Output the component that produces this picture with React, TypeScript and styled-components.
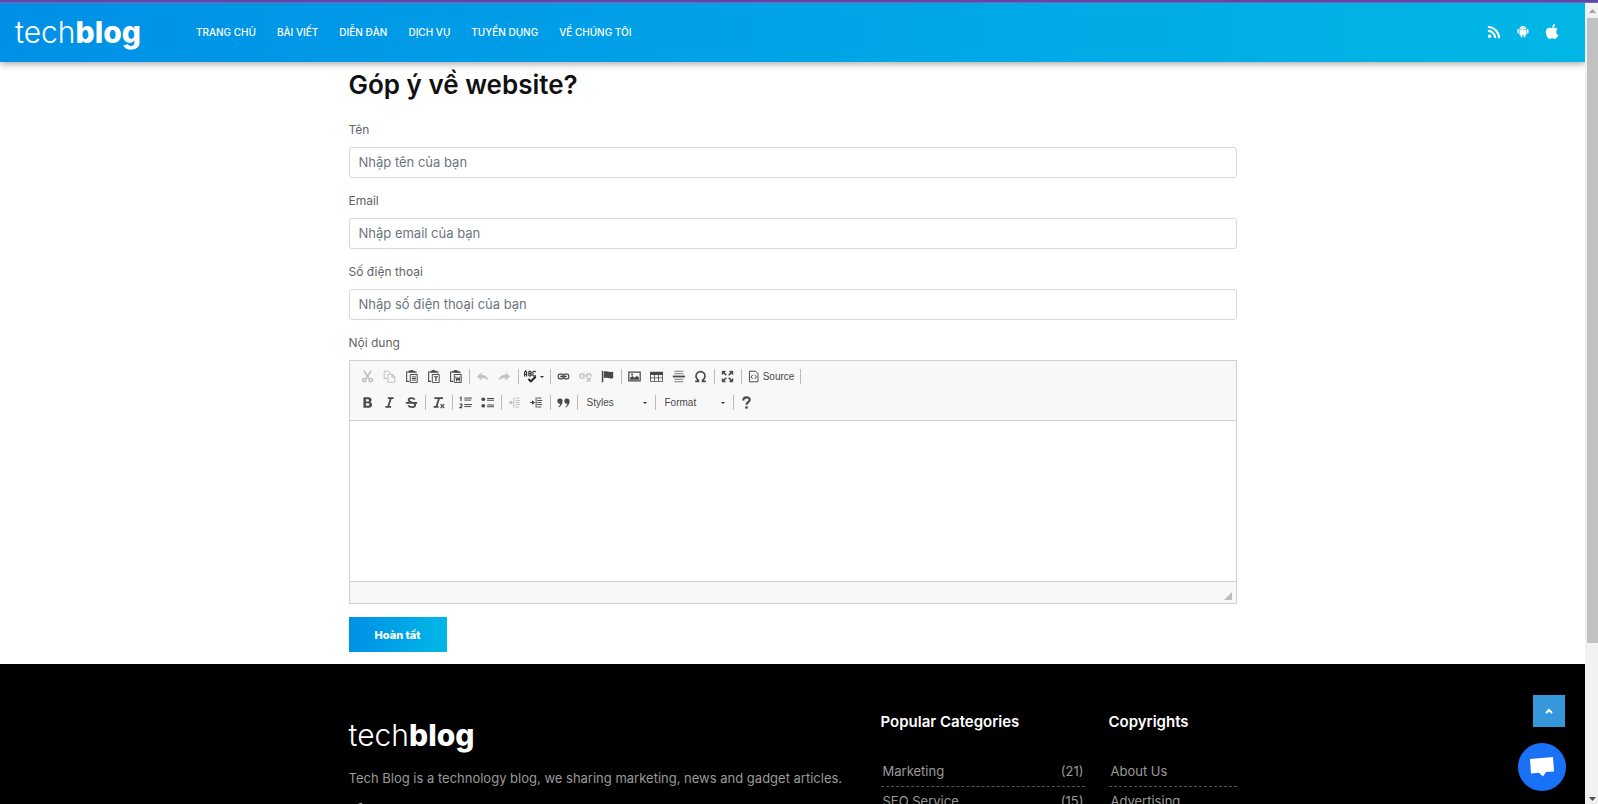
import React from 'react';
import styled, { createGlobalStyle, css } from 'styled-components';
import { FaRss, FaApple, FaFacebookF } from 'react-icons/fa';
import { IoLogoAndroid } from 'react-icons/io';

const sans = `Inter, 'Noto Sans', sans-serif`;
const gradient = 'linear-gradient(to right, #0090e7 0%, #00b7e6 100%)';

const GlobalStyle = createGlobalStyle`
  *, *::before, *::after { box-sizing: border-box; }
  body { margin: 0; background: #fff; font-family: ${sans}; font-size: 12px; color: #5f6468; }
  h1, h2, p, ul { margin: 0; padding: 0; }
  ul { list-style: none; }
  a { color: inherit; text-decoration: none; }
  button, input, select, textarea { font-family: inherit; margin: 0; }
`;

const Shell = styled.div`
  height: 100vh;
  display: flex;
  flex-direction: column;
  overflow: hidden;
`;
const AccentStrip = styled.div`
  flex: none;
  height: 3px;
  background: #6344a8;
  border-bottom: 1px solid #7e62b4;
`;
const Viewport = styled.div`
  flex: 1;
  min-height: 0;
  display: flex;
`;
const Page = styled.div`
  position: relative;
  flex: 1;
  min-width: 0;
  overflow: hidden;
`;

const Header = styled.header`
  position: relative;
  z-index: 2;
  display: flex;
  align-items: center;
  height: 59px;
  padding: 0 25px 2px 15px;
  background: ${gradient};
  box-shadow: 0 2px 7px rgba(0, 0, 0, 0.35);
  color: #fff;
`;
const Logo = styled.a`
  display: block;
  font-size: 30px;
  line-height: 40px;
  font-weight: 300;
  color: #fff;
  strong { font-weight: 800; }
`;
const Nav = styled.nav`
  display: flex;
  gap: 21px;
  margin-left: 55px;
  font-size: 10px;
  font-weight: 500;
`;
const HeaderIcons = styled.div`
  display: flex;
  align-items: center;
  gap: 13px;
  margin-left: auto;
  a { display: flex; width: 16px; justify-content: center; }
`;

const Container = styled.div`
  width: 100%;
  max-width: 912px;
  margin: 0 auto;
  padding: 0 12px;
`;
const Title = styled.h1`
  padding-top: 4px;
  font-size: 26px;
  line-height: 38px;
  font-weight: 600;
  color: #111;
`;
const Form = styled.form`
  padding: 16px 0 12px;
`;
const Field = styled.div`
  margin-bottom: 13px;
`;
const Label = styled.label`
  display: block;
  height: 27px;
  line-height: 20px;
  font-size: 12px;
`;
const TextInput = styled.input`
  display: block;
  width: 100%;
  height: 31px;
  padding: 0 9px 2px;
  border: 1px solid #d5d8da;
  border-radius: 3px;
  background: #fff;
  font-size: 13px;
  color: #495057;
  outline: none;
  &::placeholder { color: #6c757d; opacity: 1; }
`;

const Editor = styled.div`
  border: 1px solid #d1d1d1;
  margin-bottom: 13px;
`;
const Toolbar = styled.div`
  display: flex;
  flex-direction: column;
  gap: 1px;
  padding: 3px 7px 5px;
  background: #f8f8f8;
  border-bottom: 1px solid #d1d1d1;
`;
const ToolRow = styled.div`
  display: flex;
  align-items: center;
  height: 25px;
`;
const ToolGroup = styled.div`
  display: flex;
  align-items: center;
  &:not(:last-child)::after, &[data-end]::after {
    content: '';
    width: 1px;
    height: 15px;
    margin: 0 2px;
    background: #bcbcbc;
  }
`;
const toolText = css`
  font-family: 'Liberation Sans', Arial, sans-serif;
  font-size: 10px;
  color: #484848;
`;
const Tool = styled.button<{ $w?: number }>`
  ${toolText}
  display: flex;
  align-items: center;
  justify-content: center;
  gap: 3px;
  width: ${(p) => p.$w ?? 22}px;
  height: 22px;
  padding: 0;
  border: 0;
  background: none;
  &:disabled { opacity: 0.3; }
  svg { flex: none; }
`;
const Combo = styled.label`
  display: flex;
  align-items: center;
  width: 73px;
  padding: 0 6px 0 7px;
  select {
    ${toolText}
    flex: 1;
    min-width: 0;
    height: 20px;
    padding: 0;
    border: 0;
    background: none;
    appearance: none;
    outline: none;
  }
`;
const Writing = styled.textarea`
  display: block;
  width: 100%;
  height: 160px;
  padding: 12px;
  border: 0;
  resize: none;
  outline: none;
  font-size: 13px;
`;
const StatusBar = styled.div`
  display: flex;
  justify-content: flex-end;
  align-items: flex-end;
  height: 22px;
  padding: 0 4px 3px;
  background: #f8f8f8;
  border-top: 1px solid #d1d1d1;
`;
const Submit = styled.button`
  display: block;
  width: 98px;
  height: 35px;
  border: 0;
  background: ${gradient};
  color: #fff;
  font-size: 11px;
  font-weight: 800;
`;

const Footer = styled.footer`
  height: 400px;
  padding-top: 47px;
  background: #000;
  color: #9a9a9a;
`;
const FooterGrid = styled.div`
  display: grid;
  grid-template-columns: repeat(12, minmax(0, 1fr));
  column-gap: 24px;
`;
const Column = styled.section<{ $span: number }>`
  grid-column: span ${(p) => p.$span};
`;
const BrandColumn = styled(Column)`
  padding-top: 4px;
`;
const About = styled.p`
  padding-top: 13px;
  font-size: 13px;
  line-height: 20px;
  white-space: nowrap;
`;
const Social = styled.div`
  display: flex;
  padding: 15px 4px;
`;
const ColumnTitle = styled.h2`
  margin-bottom: 24px;
  font-size: 15px;
  line-height: 22px;
  font-weight: 600;
  color: #fff;
`;
const LinkItem = styled.li`
  border-bottom: 1px dashed #555;
  font-size: 13px;
  a {
    display: flex;
    justify-content: space-between;
    height: 29px;
    padding: 0 1px 0 2px;
    line-height: 29px;
  }
`;

const ToTop = styled.button`
  position: absolute;
  right: 20px;
  bottom: 77px;
  width: 32px;
  height: 32px;
  padding: 0;
  border: 0;
  display: grid;
  place-items: center;
  background: #3498db;
`;
const Chat = styled.button`
  position: absolute;
  right: 19px;
  bottom: 13px;
  width: 48px;
  height: 48px;
  padding: 0;
  border: 0;
  border-radius: 50%;
  display: grid;
  place-items: center;
  background: #1972f5;
`;

const ScrollTrack = styled.div`
  flex: none;
  width: 13px;
  display: flex;
  flex-direction: column;
  align-items: flex-end;
  background: #f1f1f1;
  svg { display: block; flex: none; }
`;
const ScrollThumb = styled.div`
  width: 11px;
  height: 78%;
  margin-bottom: auto;
  background: #c1c1c1;
`;

const glyphs: Record<string, React.ReactNode> = {
  cut: (
    <g fill="none" stroke="currentColor" strokeWidth="2">
      <path d="M3.5 1l6.8 10M12.500 1L5.700 11" />
      <circle cx="4" cy="12.500" r="2" />
      <circle cx="12" cy="12.500" r="2" />
    </g>
  ),
  copy: (
    <g fill="none" stroke="currentColor" strokeWidth="1.300">
      <path d="M5 10.500H1.500v-9h5l3 3" />
      <path d="M6 5.500h5.500l3 3v6.500H6z M11 5.500v3.500h3.500" />
    </g>
  ),
  paste: (
    <>
      <path d="M4 2.500H2v11.500H5M11 2.500h2.500V4" fill="none" stroke="currentColor" strokeWidth="1.300" />
      <path d="M4 1h2l1-1h2l1 1h2v2.500H4z" fill="currentColor" />
      <path d="M6.500 5.500h8.500v10h-8.500z" fill="#f8f8f8" stroke="currentColor" strokeWidth="1.200" />
    </>
  ),
  lines: <path d="M8.500 8.500h5M8.500 10.500h5M8.500 12.500h5" stroke="currentColor" strokeWidth="1.200" />,
  t: <path d="M8.500 8.300h5M11 8v5.500" stroke="currentColor" strokeWidth="1.500" />,
  w: <path d="M8.300 8l1.200 5 1.500-3.500L12.500 13l1.200-5" fill="none" stroke="currentColor" strokeWidth="1.300" />,
  undo: <path d="M1 8l6-5v3.200c4.500 0 7.500 2 8 6.800-2-2.500-4.500-3.200-8-3.200V13z" fill="currentColor" />,
  redo: <path d="M15 8L9 3v3.200c-4.500 0-7.500 2-8 6.800 2-2.500 4.500-3.200 8-3.200V13z" fill="currentColor" />,
  spell: (
    <g fill="none" stroke="#222">
      <path strokeWidth="1.300" d="M.7 8V3l1.300-2 1.300 2v5M.7 5.500h2.600M6 1.500v6M6 1.500h2L9 3 8 4.500H6M8 4.500l1.200 1.500L8 7.500H6M14.500 2.500l-1-1h-1.500l-1 1v4l1 1h1.500l1-1" />
      <path strokeWidth="2.400" d="M5.500 11l3 3L14.500 8" />
    </g>
  ),
  link: (
    <g fill="none" stroke="currentColor">
      <rect x="1.500" y="5" width="6.500" height="6" rx="2" strokeWidth="1.500" />
      <rect x="8" y="5" width="6.500" height="6" rx="2" strokeWidth="1.500" />
      <path d="M4 8h8" strokeWidth="2" />
    </g>
  ),
  unlink: (
    <g fill="none" stroke="currentColor" strokeWidth="1.800">
      <path d="M7 10H3.500a2 2 0 0 1 0-5H7M9 5h3.500a2 2 0 0 1 2 3M4.500 7.500h7" />
      <path d="M9.500 9.500l5 5M14.500 9.500l-5 5" />
    </g>
  ),
  flag: <path d="M1 1h1.800v14H1zM3.500 2c3-1.500 5 1.500 11.500 0v8c-5 1.500-7.500-1.500-11.500 0z" fill="currentColor" />,
  image: (
    <>
      <path d="M1 2.500h14v11H1z" fill="none" stroke="currentColor" strokeWidth="1.500" />
      <path d="M2.500 12V9.500l3-2 2.500 2L11 7l2.500 2.500V12z" fill="currentColor" />
      <circle cx="5" cy="5.500" r="1.300" fill="currentColor" />
    </>
  ),
  table: <path d="M0 2h16v12.500H0zM1 6.200v3.100h4V6.200zM6 6.200v3.100h4V6.200zM11 6.200v3.100h4V6.200zM1 10.300v3.200h4v-3.200zM6 10.300v3.200h4v-3.200zM11 10.300v3.200h4v-3.200z" fill="currentColor" fillRule="evenodd" />,
  rule: (
    <g stroke="currentColor">
      <path d="M3 1.500h11M3 4.500h11M3 11.500h11M3 14.500h11" strokeWidth="1.300" opacity=".7" />
      <path d="M1 8h15" strokeWidth="2.200" />
    </g>
  ),
  omega: <path d="M1.500 14h4v-1.500C3.500 11.500 2.500 9.500 2.500 7.500a5.500 5.500 0 0 1 11 0c0 2-1 4-3 5V14h4" fill="none" stroke="currentColor" strokeWidth="2" />,
  maximize: (
    <g fill="currentColor" stroke="currentColor">
      <path d="M1.500 1.500h4l-4 4zM14.500 1.500h-4l4 4zM1.500 14.500h4l-4-4zM14.500 14.500h-4l4-4z" />
      <path d="M2 2l4.500 4.500M14 2L9.500 6.500M2 14l4.500-4.500M14 14L9.500 9.500" strokeWidth="2" />
    </g>
  ),
  source: (
    <g fill="none" stroke="currentColor" strokeWidth="1.200">
      <path d="M3 1.500h7.500l3 3v10H3z" />
      <path d="M7 6L5 8.500l2 2.500M9.500 6l2 2.500-2 2.500" />
    </g>
  ),
  bold: <path d="M3 1.500h6c5 0 5 5 2 6 4 1 3.500 7-1.500 7H3zM6 4v2.800h2.500c2 0 2-2.800 0-2.800zM6 9v3h3c2 0 2-3 0-3z" fill="currentColor" fillRule="evenodd" />,
  italic: <path d="M6 2.500h7M3 13.500h7M9.800 2.500L6.200 13.500" fill="none" stroke="currentColor" strokeWidth="2.200" />,
  strike: <path d="M12 4.500C10.500 2 4.500 2 4.500 5c0 3.500 8 2.500 8 6 0 3.500-7 3.500-8.500.5M1 8.500h14" fill="none" stroke="currentColor" strokeWidth="2.200" />,
  clear: (
    <g fill="none" stroke="currentColor">
      <path d="M3 2.500h10.500M8.800 2.500L5.500 13M2 13.500h6" strokeWidth="2.200" />
      <path d="M10.500 10l4.500 5M15 10l-4.500 5" strokeWidth="1.500" />
    </g>
  ),
  numbered: (
    <g fill="none" stroke="currentColor">
      <path d="M6.500 2.500H16M6.500 5H15M6.500 10.500H16M6.500 13H15" strokeWidth="1.200" />
      <path d="M1 2.500l1.500-1v5M.8 10h2.700v2L1 14.500h3" strokeWidth="1.400" />
    </g>
  ),
  bulleted: (
    <>
      <circle cx="2.800" cy="4" r="2.300" fill="currentColor" />
      <circle cx="2.800" cy="12" r="2.300" fill="currentColor" />
      <path d="M7.500 3H16M7.500 5.300H16M7.500 11H16M7.500 13.300H16" stroke="currentColor" strokeWidth="1.300" />
    </>
  ),
  outdent: (
    <g stroke="currentColor" strokeWidth="1.200">
      <path d="M7 1.500v13M9 2.500h5M9 5.500h6M9 8h5M9 10.500h6M9 13.500h5M1 8h5" />
      <path d="M4 6L1.500 8l2.500 2z" fill="currentColor" />
    </g>
  ),
  indent: (
    <g stroke="currentColor" strokeWidth="1.200">
      <path d="M7.500 1.500v13M9 2.500h5M9 5.500h6M9 8h5M9 10.500h6M9 13.500h5M0 8h5" />
      <path d="M3 6L5.500 8L3 10z" fill="currentColor" />
    </g>
  ),
  quote: (
    <path d="M6.800 6.300c0 3.500-1.800 6.400-4.600 7.700l-.5-1c1.500-1 2.300-2.200 2.400-3.500A3.200 3.200 0 1 1 6.800 6.300zM15.500 6.300c0 3.500-1.800 6.400-4.600 7.700l-.5-1c1.500-1 2.300-2.200 2.400-3.500a3.200 3.200 0 1 1 2.700-3.200z" fill="currentColor" />
  ),
  help: (
    <>
      <path d="M4 5.500c0-5 8-5 8-.8 0 2.800-4 3-4 6" fill="none" stroke="currentColor" strokeWidth="2.600" />
      <path d="M6.500 12.700h3v2.800h-3z" fill="currentColor" />
    </>
  ),
};

const Glyph = ({ parts }: { parts: string[] }) => (
  <svg width="13" height="13" viewBox="0 0 16 16" aria-hidden="true">
    {parts.map((p) => (
      <React.Fragment key={p}>{glyphs[p]}</React.Fragment>
    ))}
  </svg>
);
const Caret = () => (
  <svg width="4" height="2" viewBox="0 0 4 2" aria-hidden="true">
    <path d="M0 0h4L2 2z" fill="#333" />
  </svg>
);

type ToolDef = { name: string; parts: string[]; off?: boolean; text?: string; caret?: boolean; w?: number };

const firstRow: ToolDef[][] = [
  [
    { name: 'Cut', parts: ['cut'], off: true },
    { name: 'Copy', parts: ['copy'], off: true },
    { name: 'Paste', parts: ['paste', 'lines'] },
    { name: 'Paste as plain text', parts: ['paste', 't'] },
    { name: 'Paste from Word', parts: ['paste', 'w'] },
  ],
  [
    { name: 'Undo', parts: ['undo'], off: true },
    { name: 'Redo', parts: ['redo'], off: true },
  ],
  [{ name: 'Spell check', parts: ['spell'], caret: true, w: 27 }],
  [
    { name: 'Link', parts: ['link'] },
    { name: 'Unlink', parts: ['unlink'], off: true },
    { name: 'Anchor', parts: ['flag'] },
  ],
  [
    { name: 'Image', parts: ['image'] },
    { name: 'Table', parts: ['table'] },
    { name: 'Horizontal line', parts: ['rule'] },
    { name: 'Special character', parts: ['omega'] },
  ],
  [{ name: 'Maximize', parts: ['maximize'] }],
  [{ name: 'Source', parts: ['source'], text: 'Source', w: 54 }],
];

const secondRow: ToolDef[][] = [
  [
    { name: 'Bold', parts: ['bold'] },
    { name: 'Italic', parts: ['italic'] },
    { name: 'Strikethrough', parts: ['strike'] },
  ],
  [{ name: 'Remove format', parts: ['clear'] }],
  [
    { name: 'Numbered list', parts: ['numbered'] },
    { name: 'Bulleted list', parts: ['bulleted'] },
  ],
  [
    { name: 'Decrease indent', parts: ['outdent'], off: true },
    { name: 'Increase indent', parts: ['indent'] },
  ],
  [{ name: 'Block quote', parts: ['quote'] }],
];

const Group = ({ tools, end }: { tools: ToolDef[]; end?: boolean }) => (
  <ToolGroup data-end={end ? '' : undefined}>
    {tools.map((t) => (
      <Tool key={t.name} type="button" aria-label={t.name} disabled={t.off} $w={t.w}>
        <Glyph parts={t.parts} />
        {t.text}
        {t.caret && <Caret />}
      </Tool>
    ))}
  </ToolGroup>
);

const Picker = ({ name }: { name: string }) => (
  <ToolGroup>
    <Combo>
      <select aria-label={name}>
        <option>{name}</option>
      </select>
      <Caret />
    </Combo>
  </ToolGroup>
);

const fields = [
  { id: 'name', label: 'Tên', hint: 'Nhập tên của bạn', type: 'text' },
  { id: 'email', label: 'Email', hint: 'Nhập email của bạn', type: 'email' },
  { id: 'phone', label: 'Số điện thoại', hint: 'Nhập số điện thoại của bạn', type: 'tel' },
];
const navItems = ['TRANG CHỦ', 'BÀI VIẾT', 'DIỄN ĐÀN', 'DỊCH VỤ', 'TUYỂN DỤNG', 'VỀ CHÚNG TÔI'];

const Brand = () => (
  <Logo href="#">
    tech<strong>blog</strong>
  </Logo>
);

export default function App() {
  return (
    <Shell>
      <GlobalStyle />
      <AccentStrip />
      <Viewport>
        <Page>
          <Header>
            <Brand />
            <Nav>
              {navItems.map((n) => (
                <a key={n} href="#">{n}</a>
              ))}
            </Nav>
            <HeaderIcons>
              <a href="#" aria-label="RSS"><FaRss size={14} /></a>
              <a href="#" aria-label="Android"><IoLogoAndroid size={17} /></a>
              <a href="#" aria-label="Apple"><FaApple size={17} /></a>
            </HeaderIcons>
          </Header>

          <Container as="main">
            <Title>Góp ý về website?</Title>
            <Form>
              {fields.map((f) => (
                <Field key={f.id}>
                  <Label htmlFor={f.id}>{f.label}</Label>
                  <TextInput id={f.id} type={f.type} placeholder={f.hint} />
                </Field>
              ))}
              <Label htmlFor="content">Nội dung</Label>
              <Editor>
                <Toolbar>
                  <ToolRow>
                    {firstRow.map((g, i) => (
                      <Group key={i} tools={g} end={i === firstRow.length - 1} />
                    ))}
                  </ToolRow>
                  <ToolRow>
                    {secondRow.map((g, i) => (
                      <Group key={i} tools={g} />
                    ))}
                    <Picker name="Styles" />
                    <Picker name="Format" />
                    <Group tools={[{ name: 'About', parts: ['help'] }]} />
                  </ToolRow>
                </Toolbar>
                <Writing id="content" />
                <StatusBar>
                  <svg width="8" height="8" viewBox="0 0 8 8" aria-hidden="true">
                    <path d="M8 0v8H0z" fill="#bcbcbc" />
                  </svg>
                </StatusBar>
              </Editor>
              <Submit type="button">Hoàn tất</Submit>
            </Form>
          </Container>

          <Footer>
            <Container>
              <FooterGrid>
                <BrandColumn $span={7}>
                  <Brand />
                  <About>Tech Blog is a technology blog, we sharing marketing, news and gadget articles.</About>
                  <Social>
                    <a href="#" aria-label="Facebook"><FaFacebookF size={12} /></a>
                  </Social>
                </BrandColumn>
                <Column $span={3}>
                  <ColumnTitle>Popular Categories</ColumnTitle>
                  <ul>
                    <LinkItem><a href="#">Marketing <span>(21)</span></a></LinkItem>
                    <LinkItem><a href="#">SEO Service <span>(15)</span></a></LinkItem>
                  </ul>
                </Column>
                <Column $span={2}>
                  <ColumnTitle>Copyrights</ColumnTitle>
                  <ul>
                    <LinkItem><a href="#">About Us</a></LinkItem>
                    <LinkItem><a href="#">Advertising</a></LinkItem>
                  </ul>
                </Column>
              </FooterGrid>
            </Container>
          </Footer>

          <ToTop type="button" aria-label="Back to top">
            <svg width="8" height="6" viewBox="0 0 8 6">
              <path d="M1 5l3-3 3 3" fill="none" stroke="#fff" strokeWidth="2" />
            </svg>
          </ToTop>
          <Chat type="button" aria-label="Chat">
            <svg width="26" height="22" viewBox="0 0 26 22">
              <path d="M1 3L24 1l1 14.500-8 .6-3 4.400-4-3.700-8 .6z" fill="#fff" />
            </svg>
          </Chat>
        </Page>
        <ScrollTrack aria-hidden="true">
          <svg width="11" height="15" viewBox="0 0 11 15">
            <path d="M2 10h7L5.500 6z" fill="#a3a3a3" />
          </svg>
          <ScrollThumb />
          <svg width="11" height="11" viewBox="0 0 11 11">
            <path d="M2 4h7L5.500 8z" fill="#505050" />
          </svg>
        </ScrollTrack>
      </Viewport>
    </Shell>
  );
}
